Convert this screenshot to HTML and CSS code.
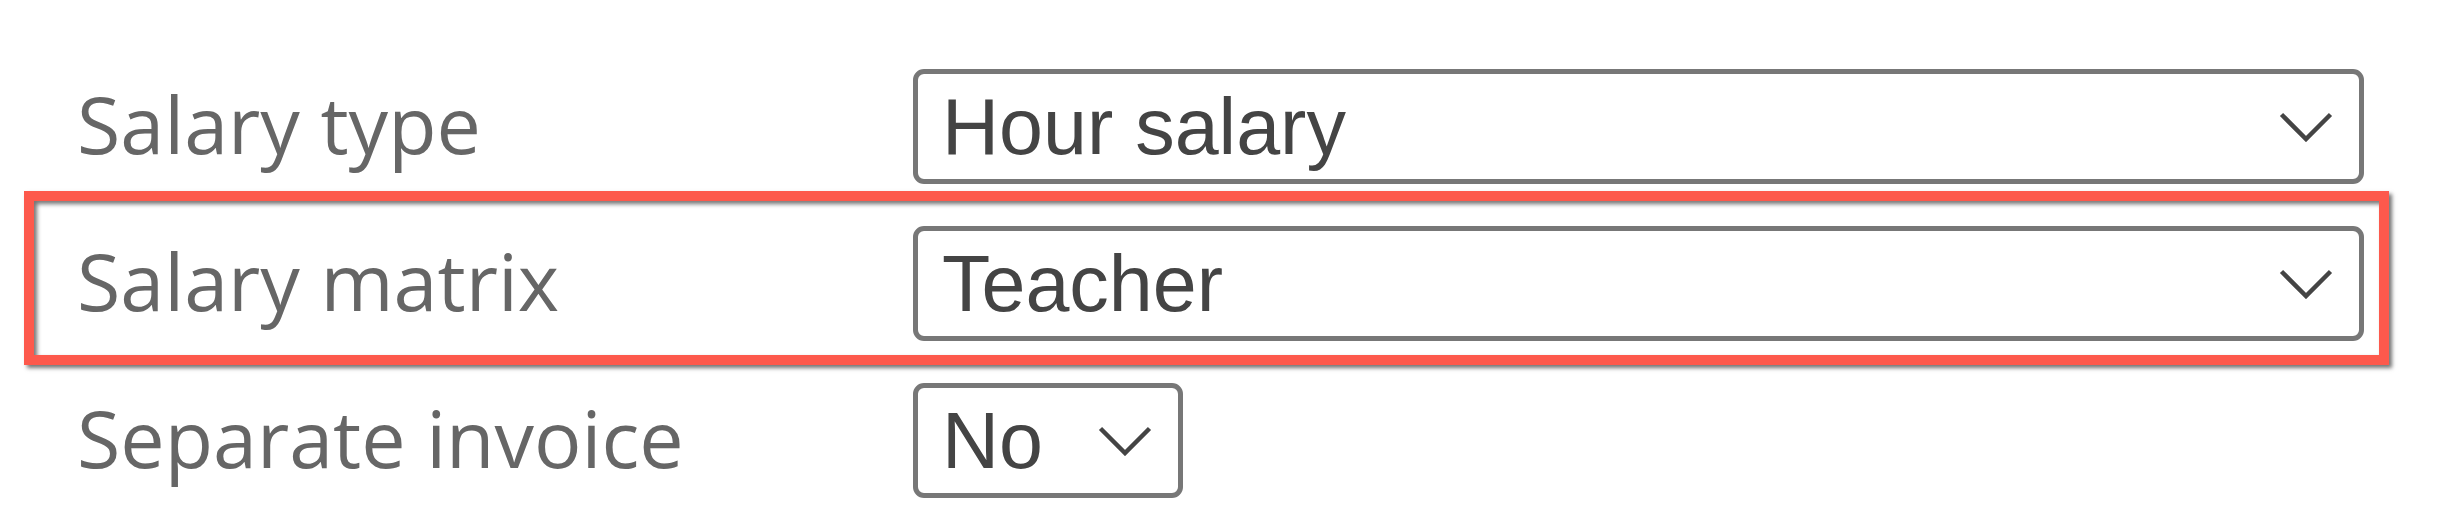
FILE: index.html
```html
<!DOCTYPE html>
<html lang="en">
<head>
<meta charset="utf-8">
<title>Salary settings</title>
<link rel="stylesheet" href="styles.css">
</head>
<body>
<div class="form">
  <div class="row">
    <div class="label">Salary type</div>
    <div class="select">
      <span class="value">Hour salary</span>
      <svg class="chev" width="54" height="30" viewBox="0 0 54 30"><path d="M2.5 2.5 L27 27 L51.5 2.5"/></svg>
    </div>
  </div>
  <div class="row highlighted">
    <div class="label">Salary matrix</div>
    <div class="select">
      <span class="value">Teacher</span>
      <svg class="chev" width="54" height="30" viewBox="0 0 54 30"><path d="M2.5 2.5 L27 27 L51.5 2.5"/></svg>
    </div>
    <div class="highlight"></div>
  </div>
  <div class="row">
    <div class="label">Separate invoice</div>
    <div class="select compact">
      <span class="value">No</span>
      <svg class="chev" width="54" height="30" viewBox="0 0 54 30"><path d="M2.5 2.5 L27 27 L51.5 2.5"/></svg>
    </div>
  </div>
</div>
</body>
</html>
```
FILE: styles.css
```css
html, body {
  margin: 0;
  padding: 0;
  background: #ffffff;
}

.form {
  display: flex;
  flex-direction: column;
  gap: 42px;
  padding: 69px 98px 0 77px;
}

.row {
  display: grid;
  grid-template-columns: 836px 1fr;
  align-items: center;
  height: 115px;
}

.highlighted {
  position: relative;
}

.label {
  font-family: "Open Sans", "Noto Sans", sans-serif;
  font-size: 79px;
  line-height: 1;
  color: #666666;
  white-space: nowrap;
  margin-bottom: 6px;
}

.select {
  box-sizing: border-box;
  height: 115px;
  display: flex;
  align-items: center;
  justify-content: space-between;
  border: 5px solid #777777;
  border-radius: 11px;
  padding: 0 26px 0 24px;
  background: #ffffff;
}

.select.compact {
  justify-self: start;
  gap: 55px;
}

.value {
  font-family: "Liberation Sans", Arial, sans-serif;
  font-size: 79px;
  color: #444444;
  white-space: nowrap;
}

.chev {
  display: block;
  flex: none;
}

.chev path {
  fill: none;
  stroke: #444444;
  stroke-width: 4.5;
}

.highlight {
  position: absolute;
  left: -53px;
  right: -25px;
  top: -35px;
  bottom: -24px;
  border: 10px solid #fd594c;
  box-shadow: 3px 3px 4px rgba(0, 0, 0, 0.55), inset 3px 3px 4px rgba(0, 0, 0, 0.55);
  pointer-events: none;
}
```
